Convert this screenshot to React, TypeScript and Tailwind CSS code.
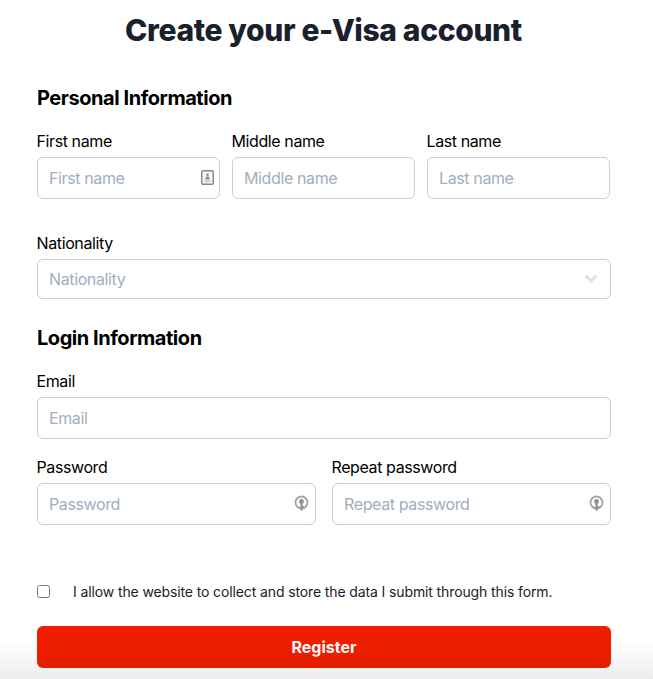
import React from "react";

const inputCls =
  "block w-full h-[42px] rounded-[6px] border border-[#c5d1e0] bg-white pl-[11px] pr-3 text-[16px] tracking-[-0.38px] text-[#1a202c] placeholder:text-[#a0aec0] outline-none";

function IdIcon() {
  return (
    <svg width="13" height="15" viewBox="0 0 13 15" className="absolute right-[6px] top-[13px]">
      <rect x="0.75" y="0.75" width="11.5" height="13.5" rx="1" fill="#f4f4f4" stroke="#8a8a8a" strokeWidth="1.5" />
      <circle cx="6.5" cy="4.8" r="1.3" fill="#8a8a8a" />
      <path d="M4 9.6 L5.4 6.4 H7.6 L9 9.6 Z" fill="#8a8a8a" />
      <rect x="3.5" y="10.6" width="6" height="1.4" fill="#c4c4c4" />
    </svg>
  );
}

function KeyIcon() {
  return (
    <svg width="15" height="17" viewBox="0 0 15 17" className="absolute right-[7px] top-[12px]">
      <circle cx="7.5" cy="7.5" r="6" fill="none" stroke="#a3a3a3" strokeWidth="1.8" />
      <circle cx="7.5" cy="6.5" r="2.4" fill="#8f8f8f" />
      <rect x="6.4" y="7" width="2.2" height="8.5" fill="#8f8f8f" />
      <rect x="8" y="11" width="2" height="1.4" fill="#8f8f8f" />
    </svg>
  );
}

function Field({ label, icon }: { label: string; icon?: React.ReactNode }) {
  return (
    <label className="block min-w-0">
      <span className="-ml-[0.5px] block h-[28px] text-[16px] leading-[24px] tracking-[-0.4px] text-black">{label}</span>
      <span className="relative block">
        <input className={inputCls} placeholder={label} />
        {icon}
      </span>
    </label>
  );
}

export default function App() {
  return (
    <div className="relative h-[679px] w-[653px] overflow-hidden bg-white font-['Inter',sans-serif]">
      <div className="pl-[37px] pr-[42px]">
        <h1 className="h-[60px] pr-[1px] text-center text-[30px] font-extrabold leading-[60px] tracking-[-0.35px] text-[#1a202c]">
          Create your e-Visa account
        </h1>
        <h2 className="mt-[24px] h-[28px] text-[20px] font-bold leading-[28px] tracking-[-0.45px] text-black">
          Personal Information
        </h2>
        <div className="mr-[1px] mt-[17px] grid grid-cols-3 gap-x-[12px]">
          <Field label="First name" icon={<IdIcon />} />
          <Field label="Middle name" />
          <Field label="Last name" />
        </div>
        <div className="mt-[32px]">
          <span className="-ml-[0.5px] block h-[28px] text-[16px] leading-[24px] tracking-[-0.38px] text-black">Nationality</span>
          <div className="relative h-[40px] w-full rounded-[6px] border border-[#c5d1e0] bg-white pl-[11px] text-[16px] leading-[38px] tracking-[-0.38px] text-[#a0aec0]">
            Nationality
            <svg width="14" height="9" viewBox="0 0 14 9" className="absolute right-[12px] top-[14px]">
              <path d="M1.5 1.5 L7 7 L12.5 1.5" fill="none" stroke="#dde3ee" strokeWidth="3" />
            </svg>
          </div>
        </div>
        <h2 className="mt-[25px] h-[28px] text-[20px] font-bold leading-[28px] tracking-[-0.45px] text-black">
          Login Information
        </h2>
        <div className="mt-[17px]">
          <Field label="Email" />
        </div>
        <div className="mt-[16px] grid grid-cols-2 gap-x-[16px]">
          <Field label="Password" icon={<KeyIcon />} />
          <Field label="Repeat password" icon={<KeyIcon />} />
        </div>
        <div className="mt-[56px] flex h-[21px] items-center">
          <input type="checkbox" className="h-[13px] w-[13px]" />
          <span className="ml-[23px] text-[14px] tracking-[-0.12px] text-[#1a202c]">
            I allow the website to collect and store the data I submit through this form.
          </span>
        </div>
        <button className="mt-[24px] block h-[42px] w-full rounded-[6px] bg-[#f01e00] text-[16px] font-bold text-white">
          Register
        </button>
      </div>
      <div className="pointer-events-none absolute inset-x-0 bottom-0 h-[40px] bg-gradient-to-b from-transparent to-[#00000012]" />
    </div>
  );
}
